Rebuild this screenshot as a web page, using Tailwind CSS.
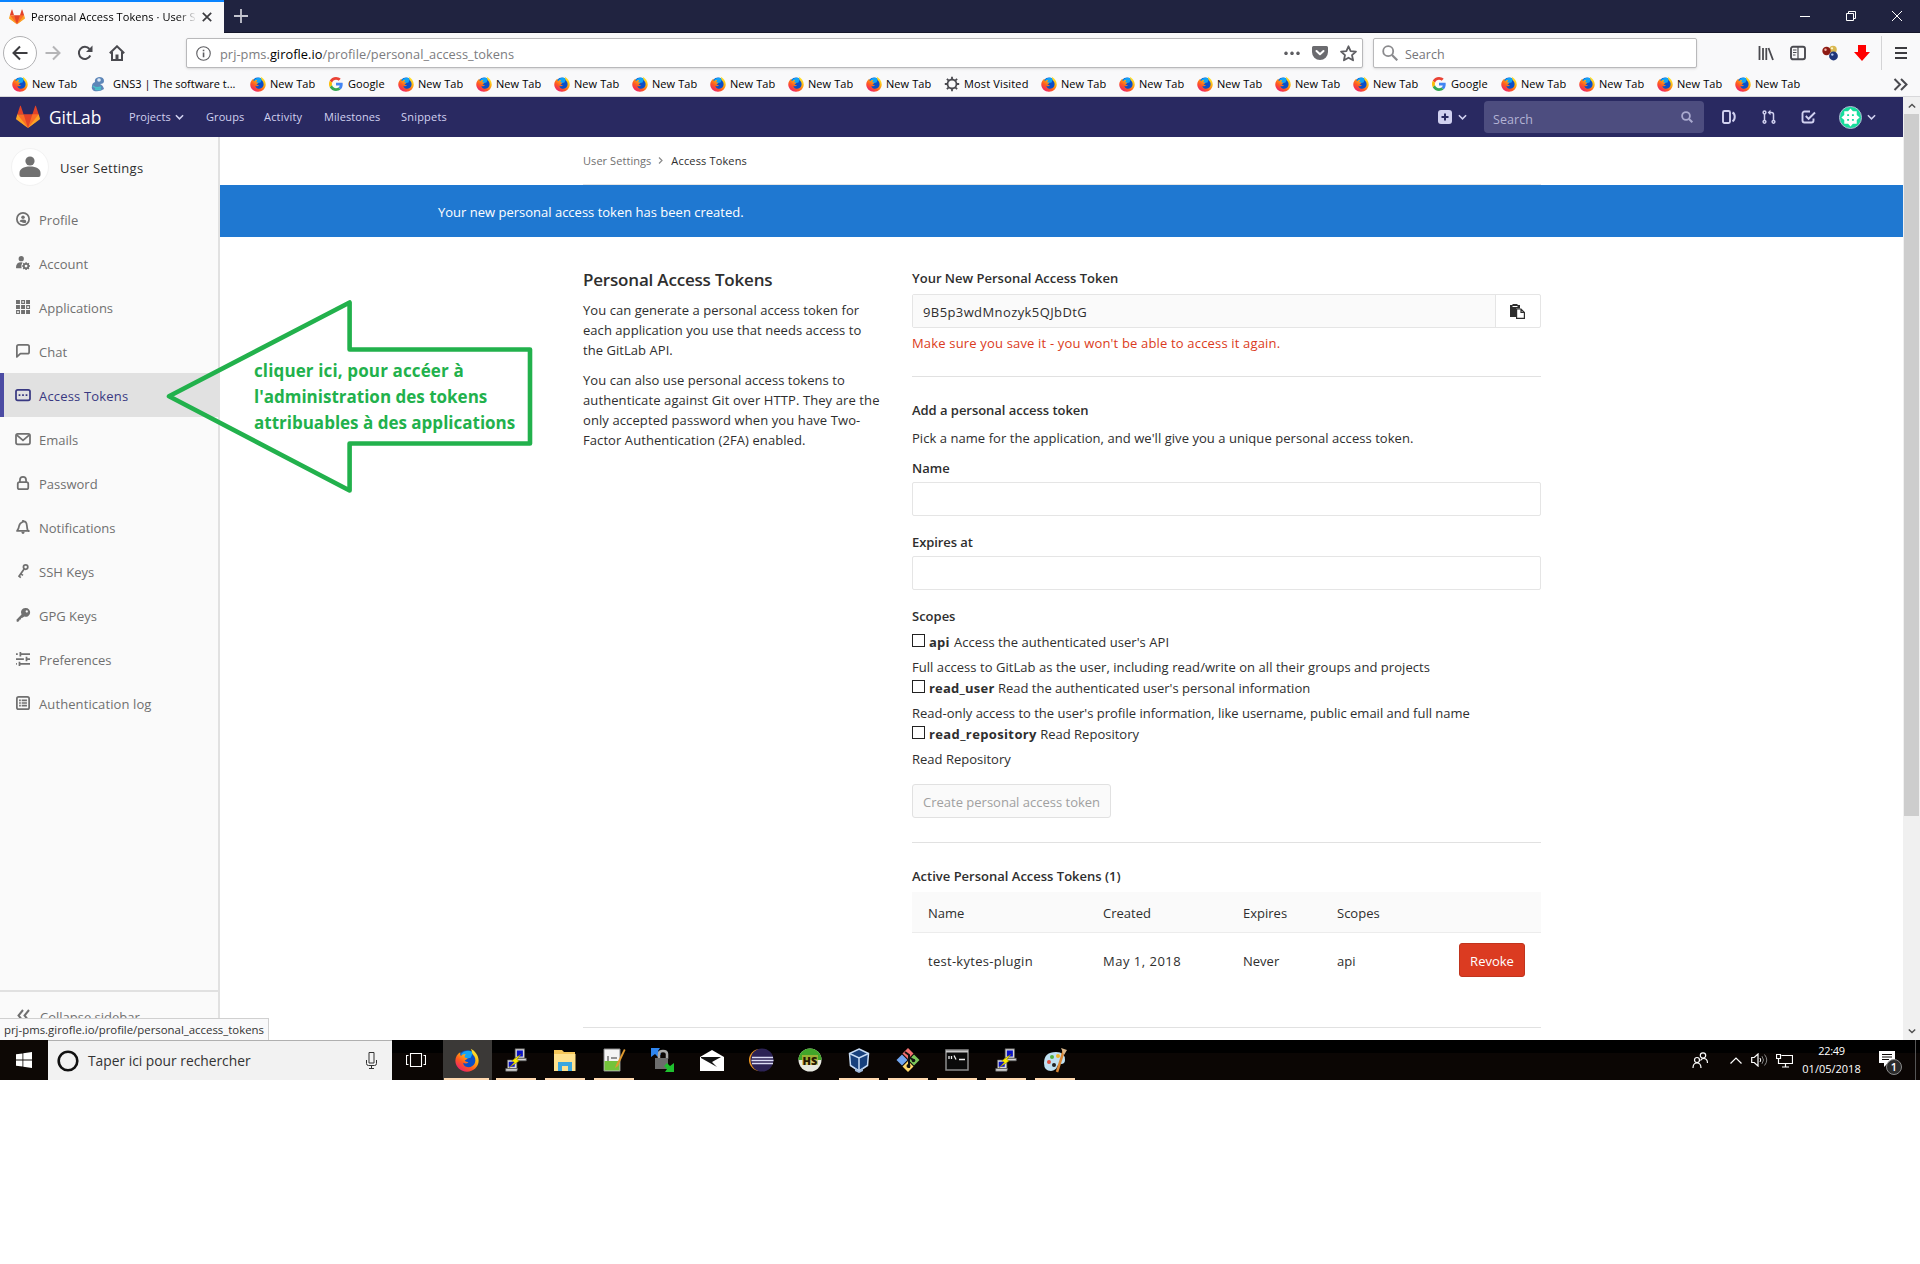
<!DOCTYPE html>
<html lang="en">
<head>
<meta charset="utf-8">
<title>Personal Access Tokens · User Settings · GitLab</title>
<script src="https://cdn.jsdelivr.net/npm/@tailwindcss/browser@4"></script>
</head>
<body class="relative h-[1264px] w-[1920px] overflow-hidden bg-white font-['Open_Sans','Noto_Sans',sans-serif] text-[13px] leading-5 text-[#2e2e2e]">

<svg class="absolute size-0">
  <symbol id="tanuki" viewBox="0 0 36 36">
    <path fill="#e24329" d="M2 14l9.38 9v-9l-4-12.28c-.205-.632-1.176-.632-1.38 0zM34 14l-9.38 9v-9l4-12.28c.205-.632 1.176-.632 1.38 0zM18 34.38 3 14h30z"/>
    <path fill="#fc6d26" d="M18 34.38 11.38 14H2l4 11zM18 34.38 24.62 14H34l-4 11z"/>
    <path fill="#fca326" d="M2 14 .1 20.16c-.18.565 0 1.2.5 1.56l17.42 12.66zM34 14l1.9 6.16c.18.565 0 1.2-.5 1.56L18 34.38z"/>
  </symbol>
  <linearGradient id="ffg" x1=".85" y1="0" x2=".15" y2="1"><stop offset="0" stop-color="#fff23a"/><stop offset=".35" stop-color="#ffb411"/><stop offset=".65" stop-color="#ff5a1f"/><stop offset="1" stop-color="#e8157d"/></linearGradient>
  <symbol id="firefox" viewBox="0 0 32 32">
    <circle cx="16" cy="16" r="13" fill="#0a4fc8"/>
    <path fill="#12a4f5" d="M8 8c4-5 12-6 16-2l-3 7-9 2z"/>
    <path fill="url(#ffg)" d="M21 1c2 3 1 5 3 8 3 3 4 7 2.500 11-2 5-8 7-12.500 4.500-2-1-3-3-3-5 2 1.500 5 1.500 7-.5-2-.5-4-1-5-2 1-1.500 3-2 4-3-1-1-3-1-4-1.500-.5-1.500.2-3 1.500-4.500-3 0-5 1-6.500 2.500C7 9.500 7 7 7 5.500 3 8 .5 12 .5 17 .5 25 7.500 31.500 16 31.500S31.500 25 31.500 17C31.500 10 27 4 21 1z"/>
  </symbol>
  <symbol id="google" viewBox="0 0 48 48">
    <path fill="#ea4335" d="M24 9.500c3.540 0 6.710 1.220 9.210 3.600l6.850-6.850C35.900 2.380 30.470 0 24 0 14.620 0 6.510 5.380 2.560 13.220l7.980 6.190C12.430 13.720 17.740 9.500 24 9.500z"/>
    <path fill="#4285f4" d="M46.980 24.550c0-1.570-.15-3.090-.38-4.550H24v9.020h12.940c-.58 2.960-2.260 5.480-4.780 7.180l7.730 6c4.510-4.180 7.090-10.360 7.090-17.650z"/>
    <path fill="#fbbc05" d="M10.530 28.590c-.48-1.450-.76-2.990-.76-4.590s.27-3.140.76-4.590l-7.980-6.190C.92 16.460 0 20.120 0 24c0 3.880.92 7.540 2.560 10.780z"/>
    <path fill="#34a853" d="M24 48c6.480 0 11.930-2.130 15.890-5.810l-7.730-6c-2.150 1.450-4.920 2.300-8.160 2.300-6.260 0-11.570-4.220-13.470-9.910l-7.980 6.190C6.510 42.620 14.620 48 24 48z"/>
  </symbol>
  <symbol id="putty" viewBox="0 0 24 28">
    <path fill="#d8d8d8" stroke="#555" stroke-width=".8" d="M11 1h11v11H11zM10 12h14v3H12zM2 14h11v10H2zM0 24h14l-1 3H0z"/>
    <path fill="#0a12c8" d="M13 3h7v7h-7zM3.500 16h7v6h-7z"/>
    <path fill="#ffee00" stroke="#665f00" stroke-width=".5" d="M18 7 7 15l3 1.500L4 23l12-8-3-1.500z"/>
  </symbol>
  <symbol id="chev" viewBox="0 0 10 6"><path d="M1 1l4 4 4-4" fill="none" stroke="currentColor" stroke-width="1.700"/></symbol>
</svg>

<!-- Browser: tab strip -->
<div class="flex h-[33px] items-center border-b border-[#14162a] bg-[#202340]">
  <div class="flex h-[33px] w-[224px] items-center border-t-2 border-[#0a84ff] bg-[#f9f9fa] pl-[9px]">
    <svg class="size-4"><use href="#tanuki"/></svg>
    <div class="ml-[6px] w-[166px] overflow-hidden bg-linear-to-r from-black from-88% to-transparent to-100% bg-clip-text text-[11px] tracking-[0.060px] whitespace-nowrap text-transparent">Personal Access Tokens · User S</div>
    <svg class="ml-[5px] size-[10px]" viewBox="0 0 10 10"><path d="M.8.800l8.400 8.400M9.200.8.800 9.200" stroke="#3c3c40" stroke-width="1.700"/></svg>
  </div>
  <svg class="ml-[10px] size-[14px]" viewBox="0 0 14 14"><path d="M7 0v14M0 7h14" stroke="#c4c5cf" stroke-width="1.800"/></svg>
  <div class="ml-auto flex items-center gap-[36px] pr-[18px]">
    <svg class="size-[10px]" viewBox="0 0 10 10"><path d="M0 5.500h10" stroke="#fff"/></svg>
    <svg class="size-[10px]" viewBox="0 0 10 10"><path d="M.5 2.500h7v7h-7zM2.500 2.500v-2h7v7h-2" fill="none" stroke="#fff"/></svg>
    <svg class="size-[10px]" viewBox="0 0 10 10"><path d="M0 0l10 10M10 0 0 10" stroke="#fff"/></svg>
  </div>
</div>

<!-- Browser: navigation toolbar -->
<div class="flex h-10 items-center bg-[#f9f9fa] text-[#4a4a4f]">
  <div class="ml-[3px] flex size-[34px] items-center justify-center rounded-full border border-[#b1b1b3] bg-white">
    <svg class="size-4" viewBox="0 0 16 16"><path d="M15.500 8H1.500M8 1.500 1.500 8 8 14.500" fill="none" stroke="#3c3c40" stroke-width="2"/></svg>
  </div>
  <svg class="ml-2 size-4" viewBox="0 0 16 16"><path d="M.5 8h14M8 1.500 14.500 8 8 14.500" fill="none" stroke="#b5b5b7" stroke-width="2"/></svg>
  <svg class="ml-4 size-4" viewBox="0 0 16 16"><path d="M13.300 10.500A6 6 0 1 1 12.500 4" fill="none" stroke="currentColor" stroke-width="2"/><path d="M15.500.5v6.500H9z" fill="currentColor"/></svg>
  <svg class="ml-4 size-4" viewBox="0 0 16 16"><path d="M.8 8.300 8 1.300l7.200 7M3 7v8h10V7" fill="none" stroke="currentColor" stroke-width="2"/><path d="M6.500 9.500h3V15h-3z" fill="currentColor"/></svg>

  <div class="ml-[61px] flex h-[30px] w-[1177px] items-center rounded-[2px] border border-[#b9b9bb] bg-white pl-[9px] text-[12.800px] shadow-sm">
    <svg class="size-[15px]" viewBox="0 0 16 16"><circle cx="8" cy="8" r="7.200" fill="none" stroke="#5e5e62" stroke-width="1.200"/><path d="M7.200 7h1.700v5H7.200zM7.200 4h1.700v1.700H7.200z" fill="#5e5e62"/></svg>
    <span class="ml-[9px] pt-[2px] tracking-[0.040px] whitespace-nowrap text-[#7c7c80]">prj-pms.<span class="text-black">girofle.io</span>/profile/personal_access_tokens</span>
    <svg class="ml-auto h-4 w-4" viewBox="0 0 16 16"><path d="M2 6.500a1.800 1.800 0 1 0 .01 0M8 6.500a1.800 1.800 0 1 0 .01 0M14 6.500a1.800 1.800 0 1 0 .01 0" fill="#5e5e62"/></svg>
    <svg class="ml-3 size-4" viewBox="0 0 16 16"><path fill="#6b6b6f" d="M1.500 1h13A1.500 1.500 0 0 1 16 2.500V7A8 8 0 0 1 0 7V2.500A1.500 1.500 0 0 1 1.500 1z"/><path d="M4.500 6 8 9.300 11.500 6" fill="none" stroke="#fff" stroke-width="2" stroke-linecap="round" stroke-linejoin="round"/></svg>
    <svg class="mr-[5px] ml-3 size-[17px]" viewBox="0 0 16 16"><path fill="none" stroke="#5e5e62" stroke-width="1.700" stroke-linejoin="round" d="m8 1.200 2 4.500 5 .5-3.700 3.300 1 4.900L8 12l-4.300 2.400 1-4.900L1 6.200l5-.5z"/></svg>
  </div>

  <div class="ml-[10px] flex h-[30px] w-[324px] items-center rounded-[2px] border border-[#b9b9bb] bg-white pl-[8px] text-[12.500px] shadow-sm">
    <svg class="size-4" viewBox="0 0 16 16"><path d="M10 10l5.300 5.300" stroke="#8a8a8d" stroke-width="2.200"/><circle cx="6.200" cy="6.200" r="5" fill="none" stroke="#8a8a8d" stroke-width="1.800"/></svg>
    <span class="ml-[7px] pt-[3px] text-[#757579]">Search</span>
  </div>

  <svg class="ml-[61px] size-4" viewBox="0 0 16 16"><path d="M1.500 1v14M5 3v12M8.300 3v12M10.500 3l4.500 12" stroke="currentColor" stroke-width="1.800" fill="none"/></svg>
  <svg class="ml-4 size-4" viewBox="0 0 16 16"><rect x="1" y="1.800" width="14" height="12.500" rx="2" fill="none" stroke="currentColor" stroke-width="1.900"/><path d="M8 2v12M3 5h3.500M3 7.500h3.500M3 10h2.500" stroke="currentColor" stroke-width="1.200"/></svg>
  <svg class="ml-4 size-4" viewBox="0 0 16 16"><circle cx="11" cy="4.500" r="3.800" fill="#d9b850"/><circle cx="4.500" cy="6" r="4.200" fill="#8e1b14"/><circle cx="11.500" cy="11" r="4.400" fill="#1f3578"/><circle cx="3.500" cy="4.700" r="1.200" fill="#f3b3a6"/><circle cx="10.300" cy="9.600" r="1.200" fill="#b6c9f2"/><circle cx="10" cy="3.300" r="1.100" fill="#fff7cf"/></svg>
  <svg class="ml-4 size-4" viewBox="0 0 16 16"><path fill="#f00" d="M4 0h8v7h4l-8 9-8-9h4z"/></svg>
  <div class="ml-[11px] h-[34px] w-px bg-[#d4d4d6]"></div>
  <svg class="ml-[13px] h-[14px] w-3" viewBox="0 0 12 14"><path d="M0 2h12M0 7h12M0 12h12" stroke="#3c3c40" stroke-width="2"/></svg>
</div>

<!-- Browser: bookmarks -->
<div class="flex h-6 items-center gap-3 border-b border-[#d8d8da] bg-[#f9f9fa] pb-px pl-3 text-[11px] tracking-[0.080px] whitespace-nowrap text-black" id="bookmarks"></div>

<!-- Page viewport -->
<div class="flex h-[943px]">
  <div class="flex w-[1903px] flex-col">
    <header class="flex h-10 items-center bg-[#292961] pl-4 text-[11px] tracking-[0.080px] text-[#d1d1f0]">
      <svg class="size-6"><use href="#tanuki"/></svg>
      <span class="ml-[9px] w-[80px] pt-px text-[17.300px] tracking-normal text-white">GitLab</span>
      <span class="w-[46px]">Projects</span>
      <svg class="h-[6px] w-[9px]"><use href="#chev"/></svg>
      <span class="ml-[22px] w-[58px]">Groups</span>
      <span class="w-[60px] tracking-[0.200px]">Activity</span>
      <span class="w-[77px]">Milestones</span>
      <span class="tracking-[0.200px]">Snippets</span>
      <svg class="ml-auto size-[14px]" viewBox="0 0 14 14"><rect width="14" height="14" rx="3" fill="#d1d1f0"/><path d="M7 3.500v7M3.500 7h7" stroke="#292961" stroke-width="2"/></svg>
      <svg class="ml-[6px] h-[6px] w-[9px]"><use href="#chev"/></svg>
      <div class="ml-[17px] flex h-8 w-[220px] items-center justify-between rounded bg-[#4d4d7f] pr-[11px] pl-[9px] text-[12.500px] text-[#b3b3d4]">
        <span class="pt-[5px]">Search</span>
        <svg class="size-3" viewBox="0 0 12 12"><circle cx="5" cy="5" r="3.900" fill="none" stroke="#a9a9cf" stroke-width="1.800"/><path d="M8 8l3.300 3.300" stroke="#a9a9cf" stroke-width="2"/></svg>
      </div>
      <svg class="ml-[18px] h-4 w-[14px]" viewBox="0 0 14 16"><rect x="1" y="2" width="7" height="12" rx="1.500" fill="none" stroke="currentColor" stroke-width="1.900"/><path d="M10.500 3.500c3 1.500 3 7 0 8.800" fill="none" stroke="currentColor" stroke-width="2"/></svg>
      <svg class="ml-[26px] h-4 w-[14px]" viewBox="0 0 14 16"><g fill="none" stroke="currentColor" stroke-width="1.500"><circle cx="2.500" cy="3.500" r="1.400"/><circle cx="2.500" cy="12.800" r="1.400"/><circle cx="11.500" cy="12.800" r="1.400"/><path d="M2.500 5v6M11.500 11V5.500a2 2 0 0 0-2-2H7"/></g><path d="M8.500.8v5.400L5.600 3.500z" fill="currentColor"/></svg>
      <svg class="ml-[25px] h-4 w-[15px]" viewBox="0 0 15 16"><path d="M9 2.500H3.500a2 2 0 0 0-2 2v7a2 2 0 0 0 2 2h7a2 2 0 0 0 2-2V9.500" fill="none" stroke="currentColor" stroke-width="1.900"/><path d="M4.800 7l2.800 2.800L14 3.500" fill="none" stroke="currentColor" stroke-width="1.900"/></svg>
      <svg class="ml-[23px] size-[23px]" viewBox="0 0 24 24"><circle cx="12" cy="12" r="11.500" fill="#16dd9c" stroke="#b9b9d8"/><path fill="#fff" d="M12 2.500l2.500 3h4v4l3 2.500-3 2.500v4h-4l-2.500 3-2.500-3h-4v-4l-3-2.500 3-2.500v-4h4z"/><path d="M8.500 8.500h2v2h-2zM13.500 8.500h2v2h-2zM8.500 13.500h2v2h-2zM13.500 13.500h2v2h-2z" fill="#16dd9c"/></svg>
      <svg class="mr-[27px] ml-[5px] h-[6px] w-[9px]"><use href="#chev"/></svg>
    </header>

    <div class="flex flex-1">
      <!-- Sidebar -->
      <aside class="flex w-[220px] shrink-0 flex-col border-r-2 border-[#e1e1e1] bg-[#fafafa] text-[#707070]">
        <div class="flex h-[60px] items-center pl-[11px]">
          <div class="flex size-[38px] items-center justify-center rounded-full border border-[#f2f2f2] bg-white">
            <svg class="size-[22px]" viewBox="0 0 22 22"><circle cx="11" cy="5" r="4.600" fill="#707070"/><path d="M.5 17c0-4 4-6.500 10.500-6.500S21.500 13 21.500 17v2q0 2-2 2h-17q-2 0-2-2z" fill="#707070"/></svg>
          </div>
          <span class="ml-[11px] pt-[2px] font-medium tracking-[0.270px] text-[#2e2e2e]">User Settings</span>
        </div>
        <nav id="nav" class="flex flex-col"></nav>
        <div class="mt-auto flex h-[50px] items-center border-t-2 border-[#e1e1e1] pb-px pl-[17px]">
          <svg class="size-[13px]" viewBox="0 0 13 13"><path d="M6 1 1.500 6.500 6 12M12 1 7.500 6.500 12 12" fill="none" stroke="currentColor" stroke-width="2"/></svg>
          <span class="ml-[10px] pt-[3px]">Collapse sidebar</span>
        </div>
      </aside>

      <!-- Content -->
      <main class="min-w-0 flex-1">
        <div class="ml-[363px] flex h-[48px] w-[958px] items-center border-b border-[#e5e5e5] text-[11px]">
          <span class="tracking-[0.060px] text-[#707070]">User Settings</span>
          <svg class="mr-2 ml-[7px] h-[7px] w-[5px]" viewBox="0 0 5 7"><path d="M1 .5l3 3-3 3" fill="none" stroke="#8a8a8a" stroke-width="1.200"/></svg>
          <span class="font-medium tracking-[0.150px]">Access Tokens</span>
        </div>
        <div class="flex h-[52px] items-center bg-[#1f78d1] pt-[2px] pl-[218px] text-white">Your new personal access token has been created.</div>

        <div class="ml-[363px] flex w-[958px] border-b border-[#e1e1e1]">
          <section class="w-[329px] pt-[31px]">
            <h4 class="text-[17px] leading-6 font-semibold tracking-[-0.190px]">Personal Access Tokens</h4>
            <p class="mt-[8px] tracking-[0.050px] whitespace-nowrap">You can generate a personal access token for<br>each application you use that needs access to<br>the GitLab API.</p>
            <p class="mt-[10px] whitespace-nowrap"><span class="tracking-[0.050px]">You can also use personal access tokens to</span><br><span class="tracking-[0.100px]">authenticate against Git over HTTP. They are the<br>only accepted password when you have Two-<br></span><span class="tracking-[0.080px]">Factor Authentication (2FA) enabled.</span></p>
          </section>
          <section class="flex h-[790px] w-[629px] flex-col">
            <h5 class="mt-[31px] font-semibold">Your New Personal Access Token</h5>
            <div class="mt-[6px] flex h-[34px] rounded-[2px] border border-[#e5e5e5]">
              <div class="flex flex-1 items-center bg-[#fafafa] pt-px pl-[10px] tracking-[0.400px]">9B5p3wdMnozyk5QJbDtG</div>
              <div class="flex w-[45px] items-center justify-center border-l border-[#e5e5e5] pr-[2px]">
                <svg class="size-[15px]" viewBox="0 0 15 15"><path fill="#2e2e2e" d="M0 1h2.500V0h5v1H10v3.500H6V13H0z"/><path d="M2.500 2.500h5" stroke="#fff"/><path d="M6.600 5h4.400l3.400 3.400v6H6.600zM11 5v3.400h3.400" fill="#fff" stroke="#2e2e2e" stroke-width="1.200"/></svg>
              </div>
            </div>
            <p class="mt-[5px] tracking-[0.170px] text-[#db3b21]">Make sure you save it - you won't be able to access it again.</p>
            <hr class="mt-[23px] border-[#e1e1e1]">
            <h5 class="mt-[23px] font-semibold tracking-[-0.040px]">Add a personal access token</h5>
            <p class="mt-[8px] tracking-[0.050px]">Pick a name for the application, and we'll give you a unique personal access token.</p>
            <label class="mt-[10px] font-semibold">Name</label>
            <div class="mt-[4px] h-[34px] rounded-[2px] border border-[#e5e5e5]"></div>
            <label class="mt-[16px] font-semibold tracking-[-0.080px]">Expires at</label>
            <div class="mt-[4px] h-[34px] rounded-[2px] border border-[#e5e5e5]"></div>
            <label class="mt-[16px] font-semibold">Scopes</label>
            <div class="mt-[6px] flex h-5"><i class="mt-[2px] mr-1 size-[13px] border border-[#222]"></i><span><b class="mr-px tracking-[0.200px]">api</b> <span class="tracking-[0.040px]">Access the authenticated user's API</span></span></div>
            <p class="mt-[5px] tracking-[0.050px]">Full access to GitLab as the user, including read/write on all their groups and projects</p>
            <div class="mt-px flex h-5"><i class="mt-[2px] mr-1 size-[13px] border border-[#222]"></i><span><b class="tracking-[0.220px]">read_user</b> Read the authenticated user's personal information</span></div>
            <p class="mt-[5px]">Read-only access to the user's profile information, like username, public email and full name</p>
            <div class="mt-px flex h-5"><i class="mt-[2px] mr-1 size-[13px] border border-[#222]"></i><span><b class="tracking-[0.370px]">read_repository</b> Read Repository</span></div>
            <p class="mt-[5px]">Read Repository</p>
            <div class="mt-[15px] flex h-[34px] w-[199px] items-center rounded-[3px] border border-[#e1e1e1] bg-[#fafafa] pt-[2px] pl-[10px] text-[#a0a0a0]">Create personal access token</div>
            <hr class="mt-[24px] border-[#e1e1e1]">
            <h5 class="mt-[23px] font-semibold">Active Personal Access Tokens (1)</h5>
            <div class="mt-[6px] grid h-[41px] grid-cols-[175px_140px_94px_1fr] items-center border-b border-[#ececec] bg-[#fafafa] pt-[2px] pl-4"><span>Name</span><span>Created</span><span>Expires</span><span>Scopes</span></div>
            <div class="grid h-[54px] grid-cols-[175px_140px_94px_122px_66px] items-center pl-4"><span class="pt-px tracking-[0.280px]">test-kytes-plugin</span><span class="pt-px tracking-[0.500px]">May 1, 2018</span><span class="pt-px">Never</span><span class="pt-px">api</span><div class="flex h-[34px] items-center justify-center rounded-[3px] border border-[#c0341d] bg-[#db3b21] pt-px text-white">Revoke</div></div>
          </section>
        </div>
      </main>
    </div>
  </div>

  <!-- Scrollbar -->
  <div class="flex w-[17px] flex-col items-center bg-[#f0f0f0] text-[#505050]">
    <svg class="mt-[6px] h-[6px] w-[8px] rotate-180"><use href="#chev"/></svg>
    <div class="mt-[5px] h-[702px] w-[15px] bg-[#cdcdcd]"></div>
    <svg class="mt-auto mb-[6px] h-[6px] w-[8px]"><use href="#chev"/></svg>
  </div>
</div>

<!-- Taskbar -->
<div class="flex h-10 bg-linear-to-b from-black from-32% to-[#0b0604] to-32% text-white">
  <div class="flex w-12 items-center justify-center bg-[#0d0805]"><svg class="size-4" viewBox="0 0 16 16"><path fill="#fff" d="M0 2.300 6.500 1.400v6.200H0zM7.300 1.300 16 0v7.600H7.300zM0 8.400h6.500v6.200L0 13.700zM7.300 8.400H16V16l-8.700-1.300z"/></svg></div>
  <div class="flex w-[344px] items-center border-t border-[#b0b0b0] bg-[#f2f2f2] pl-[9px] text-[13.800px] text-[#333]">
    <svg class="size-[22px]" viewBox="0 0 22 22"><circle cx="11" cy="11" r="9.300" fill="none" stroke="#111" stroke-width="2.600"/></svg>
    <span class="ml-[9px]">Taper ici pour rechercher</span>
    <svg class="mr-[15px] ml-auto h-[17px] w-[11px]" viewBox="0 0 11 17"><path d="M3 .5h5v10.500H3zM.5 8v3.500q0 2 2 2h6q2 0 2-2V8M5.500 13.500v3M3 16.500h5" fill="none" stroke="#333"/></svg>
  </div>
  <div class="flex w-[51px] items-center justify-center pr-1"><svg class="h-4 w-5" viewBox="0 0 20 16"><path d="M4.500 1.500h11v13h-11zM2.500 3.500h-2v9h2M17.500 3.500h2v9h-2" fill="none" stroke="#fff" stroke-width="1.100"/></svg></div>
  <div id="tasks" class="flex"></div>
  <div class="ml-auto flex items-center">
    <svg class="size-[17px]" viewBox="0 0 17 17"><g fill="none" stroke="#fff" stroke-width="1.200"><circle cx="5" cy="8" r="2.500"/><path d="M1 16q0-5 4-5t4 5"/><circle cx="11" cy="3.500" r="2.700"/><path d="M8.500 8.500Q9.500 6.500 11.500 6.500q4 0 4 4.500"/></g></svg>
    <svg class="ml-[21px] h-[7px] w-3" viewBox="0 0 12 7"><path d="M.5 6.500 6 1l5.500 5.500" fill="none" stroke="#fff" stroke-width="1.200"/></svg>
    <svg class="ml-[9px] h-[14px] w-[17px]" viewBox="0 0 17 14"><path d="M.7 4.500h2.500L7 1v12L3.200 9.500H.7z" fill="none" stroke="#fff" stroke-width="1.200"/><path d="M9 5q1.500 2 0 4" fill="none" stroke="#fff"/><path d="M11 3.200q3 3.800 0 7.600M13.500 1.500q4.500 5.500 0 11" fill="none" stroke="#888"/></svg>
    <svg class="ml-[8px] h-[15px] w-[17px]" viewBox="0 0 17 15"><path d="M5.500 2.500h11v8h-14V7M9.500 10.500v3.500M6 14h7M.5 1.500h4v4h-4zM2.500 5.500v5" fill="none" stroke="#fff" stroke-width="1.200"/></svg>
    <div class="ml-[9px] flex w-[59px] flex-col items-center text-[11px] leading-[18px]"><span class="tracking-[-0.300px]">22:49</span><span>01/05/2018</span></div>
    <div class="relative ml-[18px] size-[18px]">
      <svg class="size-4" viewBox="0 0 16 16"><path fill="#fff" d="M0 0h16v12H9l-4 4v-4H0z"/><path d="M3 3.500h10M3 6h10M3 8.500h7" stroke="#0b0604" stroke-width="1.100"/></svg>
      <span class="absolute top-[8px] left-[7px] flex size-4 items-center justify-center rounded-full border border-[#8a8a8a] bg-[#2b2b2b] text-[11px] font-semibold">1</span>
    </div>
    <div class="mr-1 ml-[18px] h-10 w-px bg-[#555]"></div>
  </div>
</div>

<!-- Link target shown by the browser -->
<div class="absolute top-[1018px] left-0 flex h-[22px] w-[269px] items-center border-t border-r border-[#d0d0d0] bg-[#f9f9fa] pl-1 text-[11.400px] whitespace-nowrap text-[#333]">prj-pms.girofle.io/profile/personal_access_tokens</div>

<!-- Annotation -->
<svg class="absolute top-[290px] left-[160px] h-[210px] w-[380px]" viewBox="160 290 380 210"><path d="M169 396.300 349.600 302.500v47H530v94H349.600v47z" fill="none" stroke="#22b14c" stroke-width="4.600" stroke-linejoin="round"/></svg>
<div class="absolute top-[358px] left-[254px] text-[17px] leading-[26px] font-bold whitespace-nowrap text-[#22b14c]"><span class="tracking-[0.130px]">cliquer ici, pour accéer à</span><br>l'administration des tokens<br>attribuables à des applications</div>

<script>
const N='<div class="flex w-[66px] items-center gap-1"><svg class="size-4 shrink-0"><use href="#firefox"/></svg><span>New Tab</span></div>';
const G='<div class="flex w-[58px] items-center gap-1"><svg class="mx-px size-[14px] shrink-0"><use href="#google"/></svg><span>Google</span></div>';
const S='<div class="flex w-[148px] items-center gap-[7px] tracking-normal"><svg class="size-4 shrink-0" viewBox="0 0 16 16"><path d="M9 1q5 0 5 4 0 3-4 3 3 1 4 5-4 3-10 2-3-2-2-5 0-3 3-4-1-4 4-5z" fill="#5d86b8"/><circle cx="9" cy="4" r="1.800" fill="#dfe9f5"/><path d="M3 10q3 3 8 1M5 13q3 1 6 0" stroke="#48c1c9" fill="none" stroke-width="1.500"/></svg><span>GNS3 | The software t...</span></div>';
const M='<div class="flex w-[85px] items-center gap-1"><svg class="size-4 shrink-0" viewBox="0 0 16 16"><circle cx="8" cy="8" r="4.500" fill="none" stroke="#4a4a4f" stroke-width="1.800"/><path d="M8 .8v2.500M8 12.700v2.500M.8 8h2.500M12.700 8h2.500M2.900 2.900l1.800 1.800M11.300 11.300l1.800 1.800M13.100 2.900l-1.800 1.800M4.700 11.300l-1.800 1.800" stroke="#4a4a4f" stroke-width="1.800"/></svg><span class="tracking-[0.150px]">Most Visited</span></div>';
const R='<svg class="mr-3 ml-auto h-[13px] w-[15px]" viewBox="0 0 15 13"><path d="M1.500 1l5.500 5.500L1.500 12M8 1l5.500 5.500L8 12" fill="none" stroke="#4a4a4f" stroke-width="2"/></svg>';
document.getElementById('bookmarks').innerHTML=[N,S,N,G,N,N,N,N,N,N,N,M,N,N,N,N,N,G,N,N,N,N,R].join('');

const st='fill="none" stroke="currentColor" stroke-width="2"';
const items=[
['Profile',`<circle cx="8" cy="8" r="7" ${st}/><circle cx="8" cy="6" r="2" fill="currentColor"/><path d="M4.300 11q0-2.500 3.700-2.500t3.700 2.500-3.700 1.200-3.700-1.200z" fill="currentColor"/>`],
['Account','<circle cx="6" cy="3" r="3" fill="currentColor"/><path d="M0 13q0-6 6-6 1 0 1.500.5L6.500 14H1q-1 0-1-1z" fill="currentColor"/><circle cx="11.500" cy="11.500" r="3.900" fill="none" stroke="#fafafa" stroke-width="3"/><circle cx="11.500" cy="11.500" r="2.600" fill="none" stroke="currentColor" stroke-width="2"/><path d="M11.500 7v2M11.500 14v2M7 11.500h2M14 11.500h2M8.300 8.300l1.400 1.400M13.300 13.300l1.400 1.400M14.700 8.300l-1.400 1.400M9.700 13.300l-1.400 1.400" stroke="currentColor" stroke-width="1.700"/>'],
['Applications','<path fill="currentColor" d="M0 0h4.500v4.500H0zM11.500 0H16v4.500h-4.500zM0 5.800h4.500v4.500H0zM5.800 5.800h4.500v4.500H5.800zM5.800 11.500h4.500V16H5.800zM11.500 11.500H16V16h-4.500z"/><path d="M6.500.700h3.200v3.200H6.500zM12.200 6.500h3.200v3.200h-3.200zM.7 12.200h3.200v3.200H.7z" fill="none" stroke="currentColor" stroke-width="1.300"/>'],
['Chat',`<path d="M1 14.800V3q0-2 2-2h10q2 0 2 2v6q0 2-2 2H5z" ${st} stroke-linejoin="round"/>`],
['Access Tokens',`<rect x="0" y="2" width="16" height="12" rx="2" ${st}/><path d="M3 7h2v2H3zM7 7h2v2H7zM11 7h2v2h-2z" fill="currentColor"/>`],
['Emails',`<rect x="0" y="2" width="16" height="12" rx="2" ${st}/><path d="M1 3.500 8 9.500l7-6" ${st}/>`],
['Password',`<rect x="2" y="7" width="12" height="8" rx="2" ${st}/><path d="M4.500 7V4.500a3.500 3.500 0 0 1 7 0V7" ${st}/>`],
['Notifications',`<path d="M1.200 12.500Q3 10.500 3.500 7T8 2t4.500 5 2.300 5.500z" ${st} stroke-linejoin="round"/><path d="M6 13.500h4q-.5 2.500-2 2.500t-2-2.500zM7 0h2v2H7z" fill="currentColor"/>`],
['SSH Keys',`<circle cx="11" cy="3.500" r="2.500" ${st}/><path d="M9.500 5.500 3 14.500M5 11l3 2M3 13.500l2.500 2" ${st}/>`],
['GPG Keys','<path fill="currentColor" fill-rule="evenodd" d="M11 0a5 5 0 1 1-1.500 9.700L7.500 11 6 11.500 5.500 13 4 13.500 3.500 15 1 16l-.5-2.500L6.300 7.500A5 5 0 0 1 11 0zm1.300 2.500a1.300 1.300 0 1 0 .01 0z"/>'],
['Preferences','<path d="M0 2.500h2M4 2.500h12M0 8h9M13 8h3M0 13.500h1M3 13.500h13M5 0v5M12 5.500v5M4 11v5" fill="none" stroke="currentColor" stroke-width="2"/>'],
['Authentication log',`<rect x="1" y="1" width="14" height="14" rx="2" ${st}/><path d="M3.500 5h2M6.500 5h6M3.500 8h2M6.500 8h6M3.500 11h2M6.500 11h6" stroke="currentColor" stroke-width="1.800"/>`]];
document.getElementById('nav').innerHTML=items.map(([t,s])=>{
 const on=t==='Access Tokens';
 return `<div class="${on?'flex h-11 items-center border-l-4 border-[#4b4ba3] bg-[#e1e1e1] pl-3 font-medium tracking-[0.180px] text-[#393982]':'flex h-11 items-center pl-4'}"><svg class="mr-[9px] size-[14px] overflow-visible" viewBox="0 0 16 16">${s}</svg><span class="${t==='Authentication log'?'pt-[2px] tracking-[0.100px]':'pt-[2px]'}">${t}</span></div>`}).join('');

const T={
ff:'<use href="#firefox"/>',pu:'<use href="#putty"/>',
ex:'<path fill="#f5c75a" d="M1 2h8l2 2h11v18H1z"/><path fill="#ffe28e" d="M1 6h21.500v17H1z"/><path fill="#3ba7e0" d="M5 14h14v9h-4v-5H9v5H5z"/>',
np:'<path fill="#f4f4f4" stroke="#888" d="M2 1h16v22H2z"/><path fill="#74c33a" d="M2.500 13h15v9.500h-15z"/><path d="M6 8v5M9 10h6" stroke="#333"/><path d="M22 1 14 17l-1 3 3-2L23.500 2z" fill="#e09a2f"/>',
ws:'<path fill="#2f86f0" d="M0 0h9L7 3l3 3-3 3-3-3-4 3z"/><path d="M8 11V6q0-3 4-3t4 3v5" fill="none" stroke="#aaa" stroke-width="2.500"/><path fill="#6d6d6d" d="M4 10h13v11H4z"/><path fill="#1fc02f" d="M23 24h-9l2-3-3-3 3-3 3 3 4-3z"/>',
ml:'<path fill="#fff" d="M0 9 12 2l12 7v14H0z"/><path fill="#111" d="M1 9h20l-9 5 5 5-16-9z"/>',
ec:'<circle cx="11" cy="12" r="11" fill="#f39a1f"/><circle cx="13" cy="12" r="11.500" fill="#2c2255"/><path d="M3 9.500h21M2.500 12.500h22M3 15.500h21" stroke="#dcdcf5" stroke-width="1.600"/>',
hs:'<circle cx="12" cy="12" r="11.500" fill="#e8e8e0"/><path fill="#41a62a" d="M.5 12a11.500 11.500 0 0 1 23 0z"/><path fill="#c9b93c" d="M4 7h16v10H4z" opacity=".65"/><text x="12" y="16.500" text-anchor="middle" font-size="11" font-weight="800" fill="#241800">HS</text>',
vb:'<path fill="#17407c" stroke="#c7dcf5" stroke-width="1.500" d="M12 1l9.500 4.500-1 12L12 23l-8.500-5.500-1-12z"/><path d="M2.500 5.500 12 10l9.500-4.500M12 10v13" fill="none" stroke="#c7dcf5" stroke-width="1.500"/><path fill="#9fb9dc" d="M8 20l4 3 4-3v3l-4 2-4-2z"/>',
gi:'<path fill="#f07070" d="M12 0l5.500 5.500L12 11 6.500 5.500z"/><path fill="#72a6f0" d="M6 6.500l5.500 5.500L6 17.500.5 12z"/><path fill="#7cc75a" d="M18 6.500l5.500 5.500-5.500 5.500-5.500-5.500z"/><path fill="#ffd86b" d="M12 13l5.500 5.500L12 24l-5.500-5.500z"/><path d="M9 4l4 3v13M13 9l5 3.500" stroke="#111" stroke-width="2" fill="none"/><circle cx="12.500" cy="18" r="2" fill="#111"/><circle cx="17.500" cy="12.500" r="1.800" fill="#111"/>',
cm:'<path fill="#0a0a0a" stroke="#8c8c8c" stroke-width="1.500" d="M1 2h22v20H1z"/><path d="M1 3.500h22" stroke="#c9c9c9" stroke-width="2"/><path d="M4 8v3M6.500 8v3M9 7.500l2 4M14 11.500h6" stroke="#eee" stroke-width="1.300"/>',
pa:'<path fill="#bfe0f2" d="M1 15q0-11 12-11 9 0 9 8 0 4-4 4-3 0-4 3t-6 4q-7 0-7-8z"/><circle cx="6" cy="14" r="2" fill="#e14b3c"/><circle cx="9" cy="9" r="2" fill="#52b043"/><circle cx="15" cy="8" r="2" fill="#f0b429"/><circle cx="11" cy="17" r="2" fill="#222"/><path d="M21 2 14 24" stroke="#d98736" stroke-width="2.500"/><path d="M18 0l6 2-3 5z" fill="#d9b78c"/>'};
const order=['ff','pu','ex','np','ws','ml','ec','hs','vb','gi','cm','pu','pa'];
const open=[1,1,1,1,0,0,0,0,1,1,1,1,1];
document.getElementById('tasks').innerHTML=order.map((k,i)=>`<div class="${i===0?'flex w-[49px] flex-col items-center bg-[#3b3937] pr-[2px]':'flex w-[49px] flex-col items-center pr-[2px]'}"><svg class="mt-2 size-6 overflow-visible" ${k==='ff'||k==='pu'?'':'viewBox="0 0 24 24"'}>${T[k]}</svg><div class="${open[i]?(i===0?'mt-auto h-[2px] w-[45px] bg-[#ffd9b0]':'mt-auto h-[2px] w-10 bg-[#ffd9b0]'):''}"></div></div>`).join('');
</script>
</body>
</html>
